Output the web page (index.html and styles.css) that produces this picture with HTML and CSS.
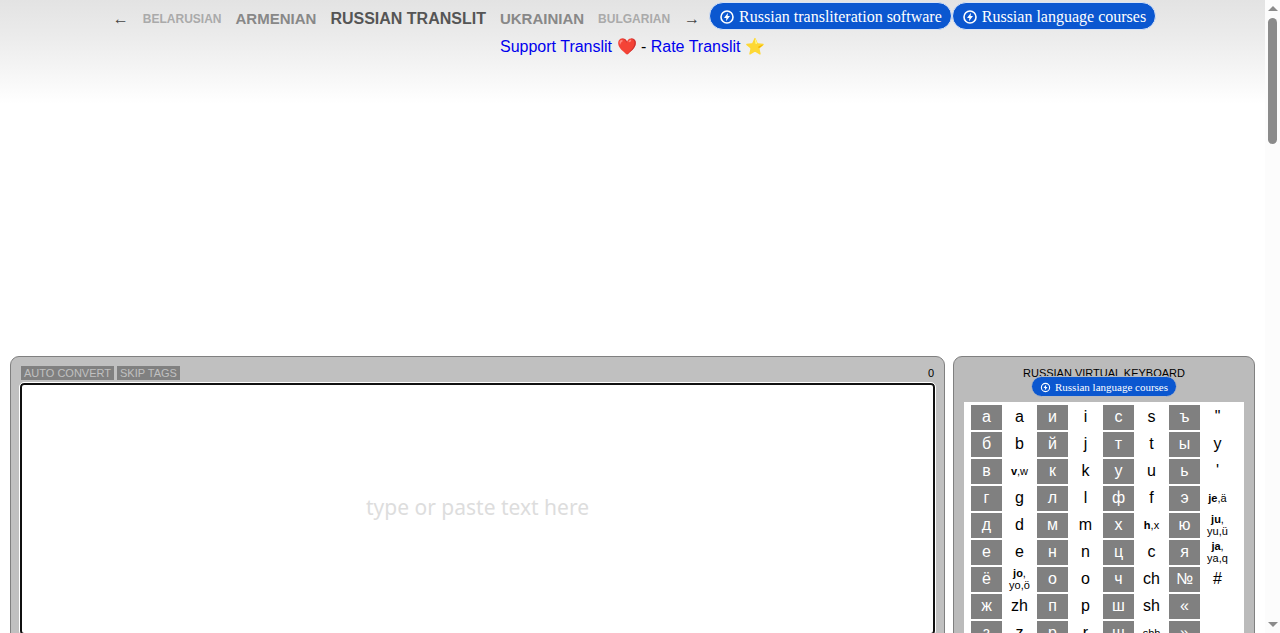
FILE: index.html
```html
<!DOCTYPE html>
<html lang="en">
<head>
  <meta charset="utf-8">
  <title>Russian Translit</title>
  <link rel="stylesheet" href="styles.css">
</head>
<body>

<svg width="0" height="0" class="defs" aria-hidden="true">
  <symbol id="bolt" viewBox="0 0 16 16">
    <circle cx="8" cy="8" r="6" fill="none" stroke="currentColor" stroke-width="1.6"/>
    <path d="M9 3.8 5 8.900h2.400L7 12.200l4-5.100H8.600z" fill="currentColor"/>
  </symbol>
</svg>

<div class="page">
<header class="top">
  <nav class="langs">
    <a class="arrow" href="#prev">←</a>
    <a class="far" href="#be">BELARUSIAN</a>
    <a class="near" href="#hy">ARMENIAN</a>
    <a class="current" href="#ru">RUSSIAN TRANSLIT</a>
    <a class="near" href="#uk">UKRAINIAN</a>
    <a class="far" href="#bg">BULGARIAN</a>
    <a class="arrow" href="#next">→</a>
  </nav>
  <div class="promos">
    <a class="promo" href="#software"><svg><use href="#bolt"/></svg>Russian transliteration software</a>
    <a class="promo" href="#courses"><svg><use href="#bolt"/></svg>Russian language courses</a>
  </div>
</header>
<p class="support"><a href="#support">Support Translit ❤️</a> - <a href="#rate">Rate Translit ⭐</a></p>

<div class="ad"></div>

<main class="work">
  <section class="panel editor">
    <div class="tools">
      <button type="button">AUTO CONVERT</button>
      <button type="button">SKIP TAGS</button>
      <span class="count">0</span>
    </div>
    <textarea class="text" aria-label="Text" placeholder="type or paste text here"></textarea>
  </section>

  <section class="panel keyboard">
    <h2>RUSSIAN VIRTUAL KEYBOARD</h2>
    <a class="promo small" href="#courses"><svg><use href="#bolt"/></svg>Russian language courses</a>
    <div class="keys">
      <table>
        <tr><th>а</th><td>a</td><th>и</th><td>i</td><th>с</th><td>s</td><th>ъ</th><td>"</td></tr>
        <tr><th>б</th><td>b</td><th>й</th><td>j</td><th>т</th><td>t</td><th>ы</th><td>y</td></tr>
        <tr><th>в</th><td class="multi"><b>v</b>,w</td><th>к</th><td>k</td><th>у</th><td>u</td><th>ь</th><td>'</td></tr>
        <tr><th>г</th><td>g</td><th>л</th><td>l</td><th>ф</th><td>f</td><th>э</th><td class="multi"><b>je</b>,ä</td></tr>
        <tr><th>д</th><td>d</td><th>м</th><td>m</td><th>х</th><td class="multi"><b>h</b>,x</td><th>ю</th><td class="multi"><b>ju</b>,<br>yu,ü</td></tr>
        <tr><th>е</th><td>e</td><th>н</th><td>n</td><th>ц</th><td>c</td><th>я</th><td class="multi"><b>ja</b>,<br>ya,q</td></tr>
        <tr><th>ё</th><td class="multi"><b>jo</b>,<br>yo,ö</td><th>о</th><td>o</td><th>ч</th><td>ch</td><th>№</th><td>#</td></tr>
        <tr><th>ж</th><td>zh</td><th>п</th><td>p</td><th>ш</th><td>sh</td><th>«</th><td></td></tr>
        <tr><th>з</th><td>z</td><th>р</th><td>r</td><th>щ</th><td class="multi">shh</td><th>»</th><td></td></tr>
      </table>
    </div>
  </section>
</main>
</div>

<div class="scrollbar" aria-hidden="true">
  <svg viewBox="0 0 10 5"><path d="M5 0 10 5H0z"/></svg>
  <div class="thumb"></div>
  <svg viewBox="0 0 10 5"><path d="M0 0h10L5 5z"/></svg>
</div>

</body>
</html>
```

FILE: styles.css
```css
* { box-sizing: border-box; }
body {
  display: flex;
  height: 100vh;
  margin: 0;
  overflow: hidden;
  background: white;
  font: 16px/18px "Liberation Sans", Arial, sans-serif;
}
a { color: #0000ee; text-decoration: none; }
.defs { position: absolute; }

.page {
  flex: 1;
  height: 100vh;
  overflow: hidden;
  background: linear-gradient(#e3e3e3, #ebebeb 35px, #fff 104px);
}

.top {
  display: flex;
  justify-content: center;
  gap: 9px;
  padding: 2px 0 0 4px;
}
.langs {
  display: flex;
  align-items: center;
  gap: 14px;
  height: 34px;
  font-weight: bold;
}
.langs .arrow { color: #444; font-weight: normal; }
.langs .far { color: #aaa; font-size: 12px; }
.langs .near { color: #888; font-size: 15px; }
.langs .current { color: #555; }
.promos {
  display: flex;
  align-items: flex-start;
}
.promo {
  display: inline-flex;
  align-items: center;
  gap: 4px;
  height: 28px;
  padding: 1px 9px 0;
  border: 1px solid #d7e3f7;
  border-radius: 14px;
  background: #0b57d0;
  color: white;
  font-family: "Liberation Serif", "Times New Roman", serif;
}
.promo svg { width: 16px; height: 16px; }

.support { margin: 2px 0 0; text-align: center; }
.ad { height: 300px; }

.work {
  display: flex;
  gap: 8px;
  padding: 0 10px;
}
.panel {
  height: 400px;
  border: 1px solid #808080;
  border-radius: 9px;
  background: #c0c0c0;
}
.editor { flex: 1; padding: 9px; }
.tools {
  display: flex;
  gap: 3px;
  height: 17px;
  padding: 0 1px;
  font-size: 11px;
  line-height: 14px;
}
.tools button {
  height: 14px;
  padding: 0 3px;
  border: 0;
  background: #808080;
  color: #c0c0c0;
  font: inherit;
}
.count { margin-left: auto; }
.text {
  display: block;
  width: 100%;
  height: 252px;
  padding: 107px 10px 0;
  border: 2px solid #101010;
  border-radius: 4px;
  outline: 1px solid white;
  resize: none;
  background: white;
  font: 21px/30px "Noto Sans", sans-serif;
  text-align: center;
}
.text::placeholder { color: #ddd; opacity: 1; }

.keyboard {
  width: 302px;
  padding: 9px 10px;
  background: #bbb;
  text-align: center;
}
.keyboard h2 {
  height: 10px;
  margin: 0;
  font-size: 11px;
  font-weight: normal;
  line-height: 14px;
}
.promo.small {
  display: flex;
  position: relative;
  width: fit-content;
  height: 21px;
  margin: 0 auto 5px;
  padding: 1px 8px 0;
  border-color: #b4b9c4;
  font-size: 11px;
}
.small svg { width: 11px; height: 11px; }
.keys {
  padding: 1px 5px;
  background: white;
}
.keys table { border-spacing: 2px; }
.keys th, .keys td {
  width: 31px;
  height: 25px;
  padding: 0 0 2px;
  font-weight: normal;
}
.keys th { background: #808080; color: white; }
.keys .multi { padding: 0 0 1px; font-size: 11px; line-height: 12px; }

.scrollbar {
  display: flex;
  flex-direction: column;
  align-items: center;
  width: 15px;
  height: 100vh;
  padding: 6px 0;
  background: #fcfcfc;
}
.scrollbar svg { width: 10px; height: 5px; fill: #8b8b8b; }
.thumb {
  width: 9px;
  height: 126px;
  margin: 7px 0 auto;
  border-radius: 5px;
  background: #8b8b8b;
}
```
